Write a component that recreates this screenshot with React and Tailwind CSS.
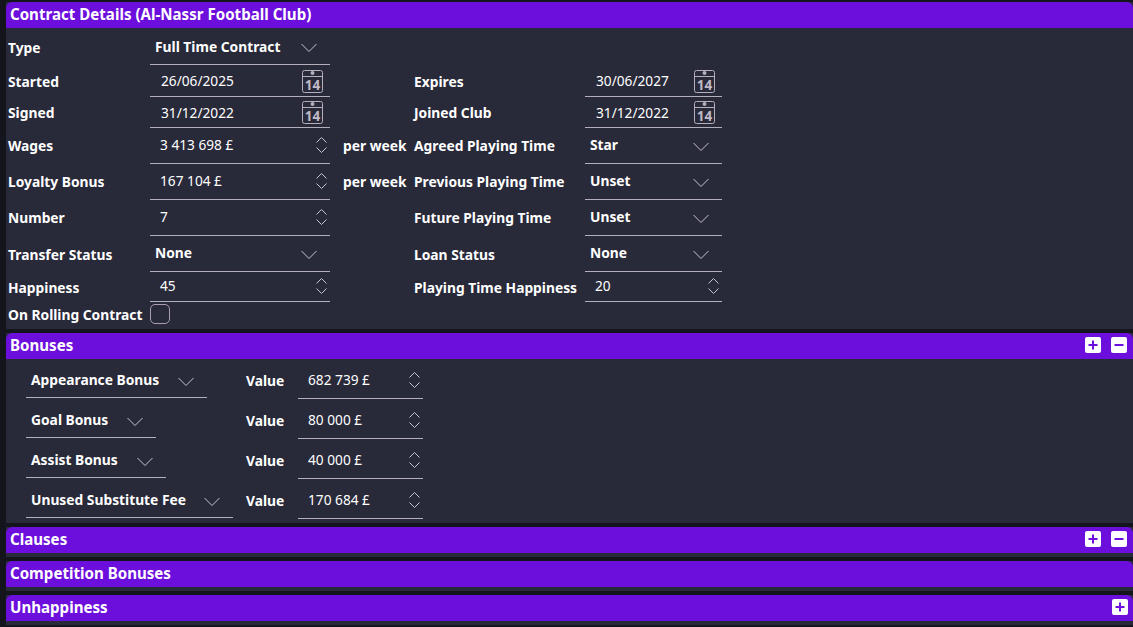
const Chevron = ({ className = "" }) => (
  <svg width="16" height="9" viewBox="0 0 16 9" fill="none" stroke="#c9c3d0" strokeWidth="1" className={className}>
    <path d="M0.5 0.5 L8 8 L15.5 0.5" />
  </svg>
);

const Spinner = () => (
  <svg width="11" height="16" viewBox="0 0 11 16" fill="none" stroke="#c9c3d0" strokeWidth="1" className="absolute right-[3px] top-1/2 -translate-y-1/2">
    <path d="M0.5 5.5 L5.5 0.5 L10.5 5.5" />
    <path d="M0.5 10.5 L5.5 15.5 L10.5 10.5" />
  </svg>
);

const Calendar = ({ top }) => (
  <svg width="21" height="23" viewBox="0 0 21 23" className={`absolute right-[7px] ${top}`}>
    <rect x="0.5" y="0.5" width="20" height="22" rx="2" fill="none" stroke="#b5aebb" strokeWidth="1" />
    <path d="M0.5 6.5 H20.5" stroke="#b5aebb" strokeWidth="1" />
    <circle cx="10.5" cy="3" r="2" fill="#b5aebb" />
    <text x="10.5" y="19.5" textAnchor="middle" fontFamily="Noto Sans, sans-serif" fontWeight="700" fontSize="13.5" fill="#c0b9c8">14</text>
  </svg>
);

const Label = ({ children, className = "mt-[2px]" }) => (
  <div className={`text-[13.8px] font-bold text-white whitespace-nowrap ${className}`}>{children}</div>
);

const Select = ({ value, w = "w-[180px]", h = "h-full", chevron = "right-[13px] mt-[1px]", text = "" }) => (
  <div className={`relative flex items-center border-b border-[#b5aebb] pl-[5px] text-[13.8px] font-bold text-white ${w} ${h}`}>
    <span className={`whitespace-nowrap ${text}`}>{value}</span>
    <Chevron className={`absolute top-1/2 -translate-y-1/2 ${chevron}`} />
  </div>
);

const DateField = ({ value, w = "w-[180px]", top = "top-[5px]" }) => (
  <div className={`relative flex h-full items-center border-b border-[#b5aebb] pl-[11px] text-[13.7px] text-white ${w}`}>
    <span className="mt-[2px]">{value}</span>
    <Calendar top={top} />
  </div>
);

const NumberField = ({ value, w = "w-[180px]", text = "", spin = "bottom-[2px]" }) => (
  <div className={`relative flex h-full items-center border-b border-[#b5aebb] pl-[10px] text-[13.7px] text-white ${w}`}>
    <span className={text}>{value}</span>
    <div className={`absolute right-0 top-0 w-[14px] ${spin}`}>
      <Spinner />
    </div>
  </div>
);

const SquareButton = ({ kind }) => (
  <svg width="16" height="16" viewBox="0 0 16 16">
    <rect width="16" height="16" rx="2" fill="#ffffff" />
    <path d={kind === "plus" ? "M3.5 8 H12.5 M8 3.5 V12.5" : "M3.5 8 H12.5"} stroke="#6c0fdc" strokeWidth="2" />
  </svg>
);

const Header = ({ title, plus, minus }) => (
  <div className={`flex h-[26px] items-center justify-between rounded-t-[6px] bg-[#6c0fdc] pl-[4px] ${minus ? "pr-[6px]" : "pr-[5px]"}`}>
    <span className="-mt-[2px] text-[15.1px] font-bold text-white">{title}</span>
    <div className="-mt-[2px] flex gap-[10px]">
      {plus && <SquareButton kind="plus" />}
      {minus && <SquareButton kind="minus" />}
    </div>
  </div>
);

// lift: the labels of these rows sit a pixel above the others
const Row = ({ h, left, leftField, unit, right, rightField, lift }) => {
  const labelClass = lift ? "mt-0" : "mt-[2px]";
  return (
    <div className={`flex ${h}`}>
      <div className="flex w-[144px] items-center pl-[2px]"><Label className={labelClass}>{left}</Label></div>
      {leftField}
      <div className="flex w-[84px] items-center pl-[13px]">{unit && <Label className={labelClass}>{unit}</Label>}</div>
      <div className="flex w-[171px] items-center">{right && <Label className={labelClass}>{right}</Label>}</div>
      {rightField}
    </div>
  );
};

const bonuses = [
  { name: "Appearance Bonus", w: "w-[181px]", value: "682 739 £" },
  { name: "Goal Bonus", w: "w-[130px]", value: "80 000 £" },
  { name: "Assist Bonus", w: "w-[140px]", value: "40 000 £" },
  { name: "Unused Substitute Fee", w: "w-[207px]", value: "170 684 £" },
];

export default function App() {
  return (
    <div className="flex h-[627px] w-[1133px] flex-col gap-[4px] overflow-hidden bg-[#14151c] pl-[6px] pt-[2px] font-['Noto_Sans',sans-serif]">
      <section className="bg-[#282939]">
        <Header title="Contract Details (Al-Nassr Football Club)" />
        <div className="flex h-[37px]">
          <div className="flex w-[144px] items-center pl-[2px]"><Label className="mt-[3px]">Type</Label></div>
          <Select value="Full Time Contract" text="mt-[3px]" chevron="right-[13px] mt-[2px]" />
        </div>
        <Row h="h-[32px]" left="Started" leftField={<DateField value="26/06/2025" />} right="Expires" rightField={<DateField value="30/06/2027" w="w-[137px]" />} />
        <Row h="h-[31px]" left="Signed" leftField={<DateField value="31/12/2022" top="top-[4px]" />} right="Joined Club" rightField={<DateField value="31/12/2022" w="w-[137px]" top="top-[4px]" />} />
        <Row lift h="h-[36px]" left="Wages" leftField={<NumberField value="3 413 698 £" />} unit="per week" right="Agreed Playing Time" rightField={<Select value="Star" w="w-[137px]" />} />
        <Row lift h="h-[36px]" left="Loyalty Bonus" leftField={<NumberField value="167 104 £" />} unit="per week" right="Previous Playing Time" rightField={<Select value="Unset" w="w-[137px]" />} />
        <Row lift h="h-[36px]" left="Number" leftField={<NumberField value="7" />} right="Future Playing Time" rightField={<Select value="Unset" w="w-[137px]" />} />
        <Row h="h-[36px]" left="Transfer Status" leftField={<Select value="None" />} right="Loan Status" rightField={<Select value="None" w="w-[137px]" />} />
        <Row h="h-[30px]" left="Happiness" leftField={<NumberField value="45" />} right="Playing Time Happiness" rightField={<NumberField value="20" w="w-[137px]" />} />
        <div className="flex h-[27px] items-center pl-[2px]">
          <Label className="-mt-[1px] w-[142px]">On Rolling Contract</Label>
          <div className="-mt-[3px] h-[20px] w-[20px] rounded-[5px] border border-[#a89fae]" />
        </div>
      </section>

      <section className="bg-[#282939]">
        <Header title="Bonuses" plus minus />
        <div className="pb-[4px]">
          {bonuses.map((b) => (
            <div key={b.name} className="flex h-[40px] pl-[20px]">
              <div className="w-[220px]">
                <Select value={b.name} w={b.w} h="h-[39px]" text="mt-[5px]" chevron="right-[13px] mt-[4px]" />
              </div>
              <div className="flex w-[52px] items-center"><Label className="mt-[4px]">Value</Label></div>
              <NumberField value={b.value} w="w-[125px]" text="mt-[4px]" spin="-bottom-[2px]" />
            </div>
          ))}
        </div>
      </section>

      <section className="bg-[#282939] pb-[4px]">
        <Header title="Clauses" plus minus />
      </section>
      <section className="bg-[#282939] pb-[4px]">
        <Header title="Competition Bonuses" />
      </section>
      <section className="bg-[#282939] pb-[4px]">
        <Header title="Unhappiness" plus />
      </section>
    </div>
  );
}
